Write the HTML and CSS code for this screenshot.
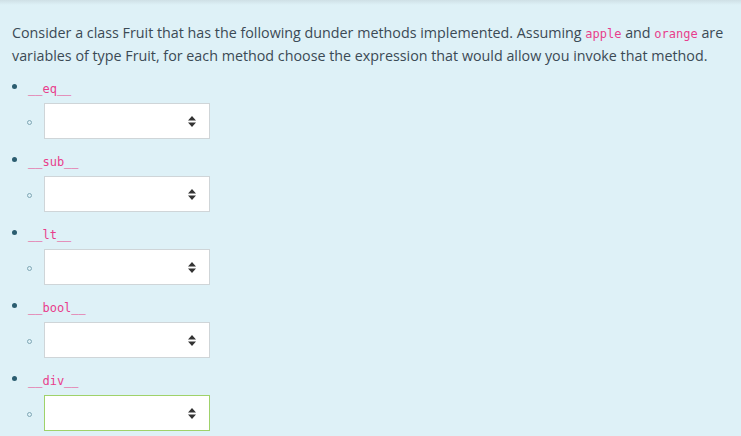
FILE: index.html
```html
<!DOCTYPE html>
<html lang="en">
<head>
<meta charset="utf-8">
<title>Fruit dunder methods</title>
<link rel="stylesheet" href="styles.css">
</head>
<body>
<div class="topshade"></div>
<div class="question">
  <p class="prompt">Consider a class Fruit that has the following dunder methods implemented. Assuming <code>apple</code> and <code>orange</code> are variables of type Fruit, for each method choose the expression that would allow you invoke that method.</p>
  <ul class="methods">
    <li class="method">
      <div class="label"><span class="dot"></span><code>__eq__</code></div>
      <div class="choice"><span class="ring"></span><div class="select"><svg class="arrows" width="8" height="11" viewBox="0 0 8 11"><path d="M4 0 L8 4.5 H0 Z M0 6.5 H8 L4 11 Z" fill="#333"/></svg></div></div>
    </li>
    <li class="method">
      <div class="label"><span class="dot"></span><code>__sub__</code></div>
      <div class="choice"><span class="ring"></span><div class="select"><svg class="arrows" width="8" height="11" viewBox="0 0 8 11"><path d="M4 0 L8 4.5 H0 Z M0 6.5 H8 L4 11 Z" fill="#333"/></svg></div></div>
    </li>
    <li class="method">
      <div class="label"><span class="dot"></span><code>__lt__</code></div>
      <div class="choice"><span class="ring"></span><div class="select"><svg class="arrows" width="8" height="11" viewBox="0 0 8 11"><path d="M4 0 L8 4.5 H0 Z M0 6.5 H8 L4 11 Z" fill="#333"/></svg></div></div>
    </li>
    <li class="method">
      <div class="label"><span class="dot"></span><code>__bool__</code></div>
      <div class="choice"><span class="ring"></span><div class="select"><svg class="arrows" width="8" height="11" viewBox="0 0 8 11"><path d="M4 0 L8 4.5 H0 Z M0 6.5 H8 L4 11 Z" fill="#333"/></svg></div></div>
    </li>
    <li class="method">
      <div class="label"><span class="dot"></span><code>__div__</code></div>
      <div class="choice"><span class="ring"></span><div class="select select-ok"><svg class="arrows" width="8" height="11" viewBox="0 0 8 11"><path d="M4 0 L8 4.5 H0 Z M0 6.5 H8 L4 11 Z" fill="#333"/></svg></div></div>
    </li>
  </ul>
</div>
</body>
</html>
```
FILE: styles.css
```css
html, body {
  margin: 0;
  padding: 0;
}
body {
  background: #def1f7;
  font-family: "Open Sans", "Noto Sans", sans-serif;
  color: #3b4a55;
  font-size: 14.3px;
}
.topshade {
  height: 5px;
  background: linear-gradient(#cfe0e6, #def1f7);
}
.question {
  padding: 0 12px;
}
.prompt {
  margin: 17px 0 0;
  line-height: 22.5px;
}
code {
  font-family: "DejaVu Sans Mono", monospace;
  font-size: 12px;
  line-height: 1;
  color: #e83e8c;
}
.methods {
  list-style: none;
  margin: 11px 0 0;
  padding: 0;
}
.method {
  margin-bottom: 12px;
}
.label {
  display: flex;
  align-items: center;
  height: 21px;
}
.dot {
  width: 5px;
  height: 5px;
  border-radius: 50%;
  background: #2b5d70;
  margin: 0 11px 4px 0;
}
.choice {
  display: flex;
  align-items: center;
  margin-top: 4px;
  padding-left: 15px;
}
.ring {
  width: 3px;
  height: 3px;
  border: 1.5px solid #7fa7b5;
  border-radius: 50%;
  margin: 2px 12px 0 0;
}
.select {
  box-sizing: border-box;
  width: 166px;
  height: 36px;
  background: #fff;
  border: 1px solid #cfd5d8;
  display: flex;
  align-items: center;
  justify-content: flex-end;
  padding-right: 13px;
}
.select-ok {
  border-color: #9fd26a;
}
.arrows {
  display: block;
}
```
